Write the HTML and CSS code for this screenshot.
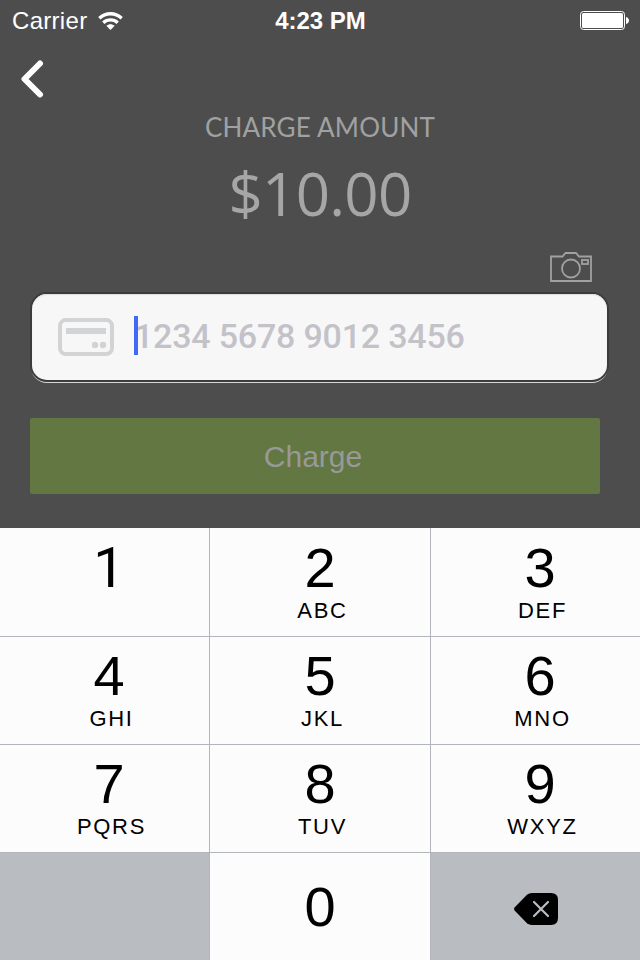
FILE: index.html
```html
<!DOCTYPE html>
<html lang="en">
  <head>
    <meta charset="UTF-8" />
    <meta name="viewport" content="width=device-width, initial-scale=1.0" />
    <title>Charge</title>
    <link rel="stylesheet" href="styles.css">
  </head>
  <body>
    <!-- status bar -->
    <header class="status">
      <div class="carrier">
        <span>Carrier</span>
        <svg class="wifi" width="26" height="18" viewBox="0 0 26 18" fill="none" stroke="#fff" stroke-width="3.300">
          <path d="M1.300 6.300C8 .2 17 .2 23.700 6.300" />
          <path d="M5.300 10.700C9.300 6.900 15.700 6.900 19.700 10.700" />
          <path d="M12.500 18L8.300 13.800C10.800 11.600 14.200 11.600 16.700 13.800Z" fill="#fff" stroke="none" />
        </svg>
      </div>
      <span class="time">4:23 PM</span>
      <svg class="battery" width="49" height="19" viewBox="0 0 49 19">
        <rect x=".5" y=".5" width="44" height="18" rx="3" fill="none" stroke="#fff" />
        <rect x="2" y="2" width="41" height="15" rx="1.500" fill="#fff" />
        <path d="M46 6c4 1 4 6 0 7z" fill="#fff" />
      </svg>
    </header>

    <main class="charge">
      <div class="back">
        <svg width="24" height="38" viewBox="0 0 24 38" fill="none" stroke="#fff" stroke-width="6" stroke-linecap="round" stroke-linejoin="round">
          <path d="M20 3.500L4.500 19l15.500 15.500" />
        </svg>
      </div>
      <h1 class="title">CHARGE AMOUNT</h1>
      <p class="amount">$10.00</p>
      <div class="camera">
        <svg width="42" height="30" viewBox="0 0 42 30" fill="none" stroke="#a1a1a1" stroke-width="1.800">
          <path d="M1 4.500H12.500L15.500 1H26L29 4.500H41V29H1Z" />
          <circle cx="21" cy="16.500" r="9" />
          <rect x="32" y="8" width="6" height="4" />
        </svg>
      </div>
      <div class="field">
        <svg width="56" height="38" viewBox="0 0 56 38" fill="#d1d3d4">
          <rect x="2" y="2" width="52" height="34" rx="6" fill="none" stroke="#d1d3d4" stroke-width="4" />
          <rect x="8" y="10" width="40" height="6" />
          <circle cx="37" cy="27" r="3.200" />
          <circle cx="45" cy="27" r="3.200" />
        </svg>
        <div class="number">
          <span class="caret"></span>
          <span class="placeholder">1234 5678 9012 3456</span>
        </div>
      </div>
      <button class="submit">Charge</button>
    </main>

    <!-- number pad -->
    <section class="keypad">
      <div class="key"><span class="digit one">1</span></div>
      <div class="key"><span class="digit">2</span><span class="letters">ABC</span></div>
      <div class="key"><span class="digit">3</span><span class="letters">DEF</span></div>
      <div class="key"><span class="digit">4</span><span class="letters">GHI</span></div>
      <div class="key"><span class="digit">5</span><span class="letters">JKL</span></div>
      <div class="key"><span class="digit">6</span><span class="letters">MNO</span></div>
      <div class="key"><span class="digit">7</span><span class="letters">PQRS</span></div>
      <div class="key"><span class="digit">8</span><span class="letters">TUV</span></div>
      <div class="key"><span class="digit">9</span><span class="letters">WXYZ</span></div>
      <div class="key grey"></div>
      <div class="key zero"><span class="digit">0</span></div>
      <div class="key grey delete">
        <svg width="44" height="32" viewBox="0 0 44 32">
          <path d="M13 1.800Q15 0 18 0H37Q44 0 44 7V25Q44 32 37 32H18Q15 32 13 30.200L.8 17.800Q-.6 16 .8 14.200Z" />
          <path d="M20 9L34 23M34 9L20 23" stroke="#b9bcc1" stroke-width="2.200" stroke-linecap="round" />
        </svg>
      </div>
    </section>
  </body>
</html>
```
FILE: styles.css
```css
*,
*::before,
*::after {
  margin: 0;
  padding: 0;
  box-sizing: border-box;
}

body {
  width: 640px;
  height: 960px;
  display: flex;
  flex-direction: column;
  background: #4d4d4d;
  font-family: "Liberation Sans", Arial, sans-serif;
  overflow: hidden;
}

svg {
  display: block;
  flex: none;
}

/* status bar */
.status {
  height: 41px;
  display: grid;
  grid-template-columns: 1fr auto 1fr;
  align-items: center;
  padding: 0 11px 0 12px;
  color: #fff;
  font-size: 24px;
  line-height: 40px;
}

.carrier {
  display: flex;
  align-items: center;
  gap: 11px;
  letter-spacing: 0.3px;
}

.time {
  font-weight: 700;
}

.battery {
  justify-self: end;
}

/* charge form */
.charge {
  height: 487px;
  display: flex;
  flex-direction: column;
}

.back {
  height: 71px;
  padding: 19px 0 0 20px;
}

.title {
  color: #a1a1a1;
  font-family: Lato, sans-serif;
  font-size: 26px;
  font-weight: 400;
  line-height: 30px;
  letter-spacing: 0.2px;
  text-align: center;
}

.amount {
  margin-top: 15px;
  color: #a6a6a6;
  font-family: "Open Sans", sans-serif;
  font-size: 60px;
  line-height: 72px;
  letter-spacing: -0.7px;
  text-align: center;
}

.camera {
  display: flex;
  justify-content: flex-end;
  margin-top: 23px;
  padding-right: 48px;
}

.field {
  display: flex;
  align-items: center;
  gap: 20px;
  height: 86px;
  margin: 12px 33px 0 32px;
  padding-left: 26px;
  border-radius: 15px;
  background: #f7f7f7;
  box-shadow: 0 0 0 2px #3c3c3c, 0 2px 0 1px #d8d8d8, inset 0 1px 1px #ddd;
}

.number {
  position: relative;
  height: 39px;
  margin-bottom: 3px;
}

.caret {
  position: absolute;
  left: 0;
  top: 0;
  width: 4px;
  height: 39px;
  background: #4169f5;
}

.placeholder {
  color: #c3c2c9;
  font-family: Roboto, sans-serif;
  font-size: 34px;
  font-weight: 500;
  line-height: 40px;
  letter-spacing: -0.2px;
}

.submit {
  width: 570px;
  height: 76px;
  margin: 38px 0 0 30px;
  padding: 2px 4px 0 0;
  border: none;
  border-radius: 2px;
  background: #627742;
  color: #999;
  font-family: inherit;
  font-size: 30px;
}

/* number pad */
.keypad {
  display: grid;
  grid-template-columns: 210px 221px 209px;
  grid-template-rows: 109px 108px 108px 107px;
  background: #fcfcfc;
}

.key {
  display: flex;
  flex-direction: column;
  align-items: center;
  padding-top: 11px;
  border-right: 1px solid #b3b5bc;
  border-bottom: 1px solid #b3b5bc;
}

.key:nth-child(-n+3) {
  padding-top: 12px;
}

.key:nth-child(3n+1) {
  padding-left: 9px;
}

.key:nth-child(3n) {
  padding-left: 9px;
  border-right: none;
}

.key:nth-child(n+10) {
  border-bottom: none;
}

.digit {
  font-size: 56px;
  line-height: 56px;
}

.one {
  font-family: Roboto, sans-serif;
}

.letters {
  margin-top: 4px;
  padding-left: 5px;
  font-size: 22px;
  line-height: 22px;
  letter-spacing: 1.7px;
}

.key.zero {
  padding-top: 26px;
}

.key.grey {
  background: #b9bcc1;
}

.key.delete {
  padding: 40px 0 0 1px;
}
```
